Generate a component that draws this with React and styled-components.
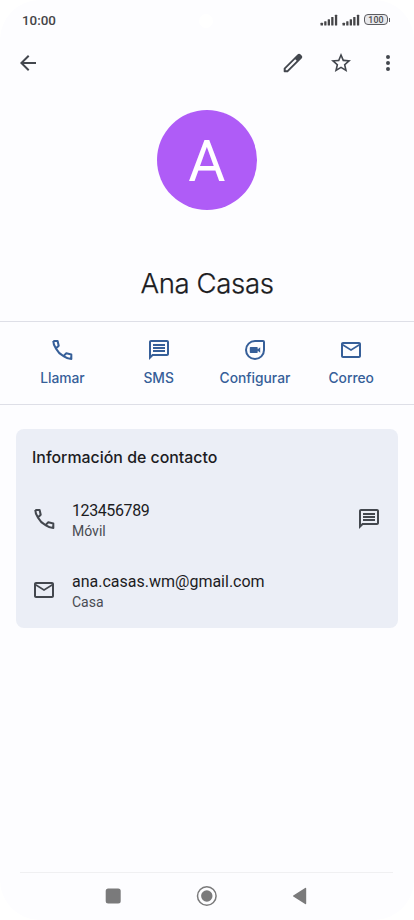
import React from 'react';
import styled, { createGlobalStyle } from 'styled-components';

const GlobalStyle = createGlobalStyle`
  * { box-sizing: border-box; }
  body { margin: 0; background: #fff; }
  button { border: 0; padding: 0; background: none; font: inherit; color: inherit; }
`;

const Phone = styled.main`
  width: 414px;
  height: 920px;
  display: flex;
  flex-direction: column;
  overflow: hidden;
  border-radius: 40px;
  background: #fdfdff;
  font-family: Roboto, sans-serif;
  color: #1c1c1f;
`;

const StatusBar = styled.header`
  height: 40px;
  padding: 0 24px 0 22px;
  display: grid;
  grid-template-columns: 1fr 14px 1fr;
  align-items: center;
`;

const Clock = styled.time`
  padding-top: 1px;
  font-size: 13.4px;
  font-weight: 500;
  line-height: 16px;
  color: #454548;
`;

const Camera = styled.span`
  width: 14px;
  height: 14px;
  margin-top: 2px;
  border-radius: 50%;
  background: #fff;
`;

const Indicators = styled.div`
  padding-bottom: 1px;
  display: flex;
  justify-content: flex-end;
  align-items: center;
`;

const Signal = styled.svg`
  width: 18px;
  height: 12px;
  margin-right: 4px;
  display: block;
  fill: #454548;
`;

const Battery = styled.div`
  width: 24px;
  height: 11px;
  border: 1px solid #5c5c60;
  border-radius: 4px;
  background: #e8e8eb;
  font-size: 8.8px;
  font-weight: 500;
  letter-spacing: 0.2px;
  line-height: 10px;
  text-align: center;
  color: #4c4c50;
`;

const BatteryTip = styled.span`
  width: 1.5px;
  height: 4px;
  margin-left: 0.5px;
  background: #5c5c60;
`;

const Toolbar = styled.nav`
  height: 46px;
  padding: 0 14px 0 16px;
  display: flex;
  align-items: center;
  color: #43474e;
`;

const IconButton = styled.button`
  width: 24px;
  height: 24px;
  margin-left: ${(p) => p.$before || 0};
`;

const Icon = styled.svg`
  width: ${(p) => p.$size || 24}px;
  height: ${(p) => p.$size || 24}px;
  display: block;
  fill: currentColor;
`;

const Profile = styled.section`
  height: 235px;
  padding-top: 24px;
  display: flex;
  flex-direction: column;
  align-items: center;
`;

const Avatar = styled.div`
  width: 100px;
  height: 100px;
  padding-right: 1px;
  border-radius: 50%;
  background: #af5cf7;
  color: #fff;
  font-size: 57px;
  letter-spacing: -0.5px;
  line-height: 104px;
  text-align: center;
`;

const Name = styled.h1`
  margin: 55px 0 0;
  font: 300 27.6px/36px Inter, sans-serif;
  letter-spacing: -0.4px;
  -webkit-text-stroke: 0.25px currentColor;
`;

const Actions = styled.section`
  height: 84px;
  padding: 0 14.7px 0 14.3px;
  display: grid;
  grid-template-columns: repeat(4, 1fr);
  border-top: 1px solid #dedfe7;
  border-bottom: 1px solid #dedfe7;
  color: #365f99;
`;

const Action = styled.button`
  height: 82px;
  padding-top: 16px;
  display: flex;
  flex-direction: column;
  align-items: center;
`;

const ActionLabel = styled.span`
  margin-top: 7px;
  font: 450 13.8px/18px Inter, sans-serif;
`;

const Card = styled.section`
  height: 199px;
  margin: 24px 16px 0;
  padding: 0 16px;
  border-radius: 8px;
  background: #ebeef6;
`;

const CardTitle = styled.h2`
  margin: 0;
  padding-top: 19px;
  font: 480 15.9px/20px Inter, sans-serif;
`;

const Rows = styled.div`
  padding-top: 33px;
`;

const Row = styled.div`
  height: 71px;
  display: grid;
  grid-template-columns: 40px 1fr 25px;
  align-items: start;
  color: #43474e;
`;

const RowIcon = styled.div`
  padding-top: 6px;
`;

const Value = styled.div`
  font-size: 16px;
  line-height: 20px;
  letter-spacing: ${(p) => p.$spacing || 0};
  color: #1c1c1f;
`;

const Kind = styled.div`
  padding-top: 1px;
  font-size: 14px;
  line-height: 18px;
  color: #484b52;
`;

const NavigationBar = styled.footer`
  height: 48px;
  margin: auto 21px 0 20px;
  padding: 0 84px 2px 85px;
  border-top: 1px solid #f0f0f2;
  display: flex;
  align-items: center;
  justify-content: space-between;
  color: #7a7a7b;
`;

const paths = {
  back: 'M20 11H7.83l5.59-5.59L12 4l-8 8 8 8 1.41-1.41L7.83 13H20z',
  star: 'M22 9.24l-7.19-.62L12 2 9.19 8.63 2 9.24l5.46 4.73L5.82 21 12 17.27 18.18 21l-1.63-7.03zM12 15.4l-3.76 2.27 1-4.28-3.32-2.88 4.38-.38L12 6.1l1.71 4.04 4.38.38-3.32 2.88 1 4.28z',
  more: 'M12 8a2 2 0 1 0 0-4 2 2 0 0 0 0 4zm0 2a2 2 0 1 0 0 4 2 2 0 0 0 0-4zm0 6a2 2 0 1 0 0 4 2 2 0 0 0 0-4z',
  chat: 'M20 2H4c-1.1 0-2 .9-2 2v18l4-4h14c1.1 0 2-.9 2-2V4c0-1.1-.9-2-2-2zm0 14H5.17L4 17.17V4h16zM6 12h12v2H6zm0-3h12v2H6zm0-3h12v2H6z',
  mail: 'M20 4H4c-1.1 0-2 .9-2 2v12c0 1.1.9 2 2 2h16c1.1 0 2-.9 2-2V6c0-1.1-.9-2-2-2zm0 14H4V8l8 5 8-5zm-8-7L4 6h16z',
};

const Glyph = ({ name, size }) => (
  <Icon viewBox="0 0 24 24" $size={size}>
    <path d={paths[name]} />
  </Icon>
);

const Handset = () => (
  <Icon viewBox="0 0 24 24">
    <path
      d="M3.300 3H7.600L8.700 7.700 5.900 10.500C7.600 13.700 10.300 16.400 13.500 18.100L16.300 15.300 21.300 16.400V21C18.500 20.900 15.900 19.700 13.500 18.100M5.900 10.500C4.400 8.300 3.300 5.800 3.300 3"
      fill="none"
      stroke="currentColor"
      strokeWidth="2.050"
      strokeLinejoin="round"
    />
  </Icon>
);

const Pencil = () => (
  <Icon viewBox="0 0 24 24">
    <path
      fillRule="evenodd"
      d="M3.500 21.300a.8.800 0 0 1-.8-.8V17.200L16.500 3.400a2.200 2.200 0 0 1 3.100 0l1 1a2.200 2.200 0 0 1 0 3.100L6.800 21.300zM4.700 19.300H6.200L15.700 9.800 14.200 8.300 4.700 17.800z"
    />
  </Icon>
);

const Video = () => (
  <Icon viewBox="0 0 24 24">
    <path
      d="M12 3h8a1 1 0 0 1 1 1v8a9 9 0 1 1-9-9z"
      fill="none"
      stroke="currentColor"
      strokeWidth="2"
    />
    <path d="M7.500 9h6.500a.7.700 0 0 1 .7.700v1.500L17.200 9.200v5.600l-2.500-2v1.500a.7.700 0 0 1-.7.700H7.500a.7.700 0 0 1-.7-.7V9.700a.7.700 0 0 1 .7-.7z" />
  </Icon>
);

const SignalBars = () => (
  <Signal viewBox="0 0 18 12">
    <rect x="0.500" y="8.700" width="2.500" height="2.800" rx="0.500" />
    <rect x="4.200" y="7.200" width="2.300" height="4.300" rx="0.500" />
    <rect x="7.700" y="5.200" width="2.300" height="6.300" rx="0.500" />
    <rect x="11.200" y="3" width="2.300" height="8.500" rx="0.500" />
    <rect x="14.900" y="0.700" width="2.300" height="10.800" rx="0.500" />
  </Signal>
);

const actions = [
  { label: 'Llamar', icon: <Handset /> },
  { label: 'SMS', icon: <Glyph name="chat" /> },
  { label: 'Configurar', icon: <Video /> },
  { label: 'Correo', icon: <Glyph name="mail" /> },
];

export default function App() {
  return (
    <>
      <GlobalStyle />
      <Phone>
        <StatusBar>
          <Clock>10:00</Clock>
          <Camera />
          <Indicators>
            <SignalBars />
            <SignalBars />
            <Battery>100</Battery>
            <BatteryTip />
          </Indicators>
        </StatusBar>
        <Toolbar>
          <IconButton aria-label="Atrás"><Glyph name="back" /></IconButton>
          <IconButton aria-label="Editar" $before="auto"><Pencil /></IconButton>
          <IconButton aria-label="Favorito" $before="24px"><Glyph name="star" /></IconButton>
          <IconButton aria-label="Más" $before="23px"><Glyph name="more" /></IconButton>
        </Toolbar>
        <Profile>
          <Avatar>A</Avatar>
          <Name>Ana Casas</Name>
        </Profile>
        <Actions>
          {actions.map(({ label, icon }) => (
            <Action key={label}>
              {icon}
              <ActionLabel>{label}</ActionLabel>
            </Action>
          ))}
        </Actions>
        <Card>
          <CardTitle>Información de contacto</CardTitle>
          <Rows>
            <Row>
              <RowIcon><Handset /></RowIcon>
              <div>
                <Value $spacing="-0.400px">123456789</Value>
                <Kind>Móvil</Kind>
              </div>
              <RowIcon><Glyph name="chat" /></RowIcon>
            </Row>
            <Row>
              <RowIcon><Glyph name="mail" /></RowIcon>
              <div>
                <Value>ana.casas.wm@gmail.com</Value>
                <Kind>Casa</Kind>
              </div>
            </Row>
          </Rows>
        </Card>
        <NavigationBar>
          <Icon viewBox="0 0 16 16" $size={16}>
            <rect x="0.700" y="0.500" width="15" height="15" rx="2.500" />
          </Icon>
          <Icon viewBox="0 0 22 22" $size={22}>
            <circle cx="11.800" cy="11" r="9.300" fill="none" stroke="currentColor" strokeWidth="1.500" />
            <circle cx="11.800" cy="11" r="5.700" />
          </Icon>
          <Icon viewBox="0 0 18 18" $size={18}>
            <path d="M15.200 1.400v15.200a.7.700 0 0 1-1.100.5L2.300 9.600a.7.700 0 0 1 0-1.200L14.100.9a.7.700 0 0 1 1.100.5z" />
          </Icon>
        </NavigationBar>
      </Phone>
    </>
  );
}
